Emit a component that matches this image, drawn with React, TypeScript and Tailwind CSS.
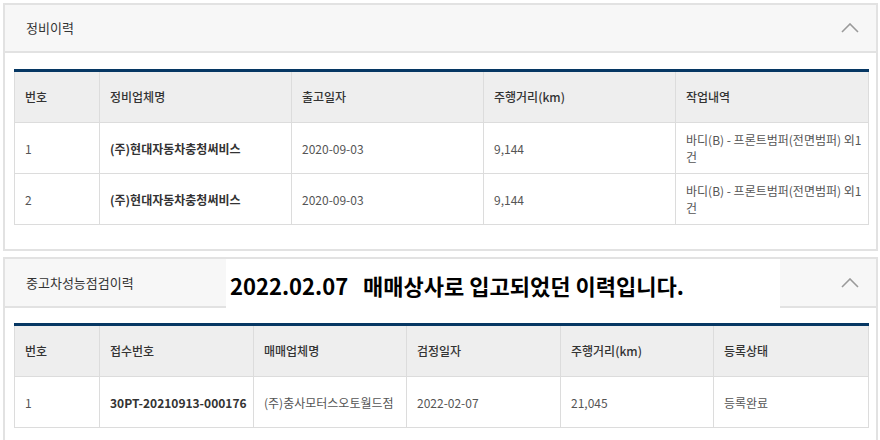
import React from "react";

const font = { fontFamily: '"Noto Sans CJK KR", "Noto Sans", sans-serif' };

function Chevron() {
  return (
    <svg width="18" height="10" viewBox="0 0 18 10" className="mr-[17px]">
      <polyline points="1,9 9,1 17,9" fill="none" stroke="#9a9a9a" strokeWidth="1.6" />
    </svg>
  );
}

const th = "border border-[#dcdcdc] bg-[#eeeeee] h-[52px] px-[10px] text-left font-medium text-[#333] text-[12px]";
const td = "border border-[#dcdcdc] h-[51px] px-[10px] text-left text-[12px] text-[#555] leading-[17px]";

export default function App() {
  return (
    <div className="w-[880px] h-[440px] overflow-hidden bg-white pt-[3px] pl-[3px]" style={font}>
      {/* Panel 1 */}
      <div className="w-[875px] border-2 border-[#e2e2e2]">
        <div className="h-[48px] bg-[#f7f7f7] border-b-2 border-[#e2e2e2] flex items-center justify-between pl-[21px]">
          <span className="text-[13px] text-[#333]">정비이력</span>
          <Chevron />
        </div>
        <div className="pt-[16px] pb-[24px] pl-[9px]">
          <table className="w-[854px] table-fixed border-collapse border-t-[3px] border-t-[#063763]">
            <colgroup>
              <col className="w-[85px]" />
              <col className="w-[192px]" />
              <col className="w-[192px]" />
              <col className="w-[192px]" />
              <col className="w-[193px]" />
            </colgroup>
            <thead>
              <tr>
                <th className={th}>번호</th>
                <th className={th}>정비업체명</th>
                <th className={th}>출고일자</th>
                <th className={th}>주행거리(km)</th>
                <th className={th}>작업내역</th>
              </tr>
            </thead>
            <tbody>
              {[1, 2].map((n) => (
                <tr key={n}>
                  <td className={td}>{n}</td>
                  <td className={td + " font-bold !text-[#333]"}>(주)현대자동차충청써비스</td>
                  <td className={td}>2020-09-03</td>
                  <td className={td}>9,144</td>
                  <td className={td}>
                    <span className="whitespace-nowrap">바디(B) - 프론트범퍼(전면범퍼) 외1</span>
                    <br />건
                  </td>
                </tr>
              ))}
            </tbody>
          </table>
        </div>
      </div>

      {/* Panel 2 */}
      <div className="relative w-[875px] border-2 border-[#e2e2e2] mt-[6px]">
        <div className="h-[49px] bg-[#f7f7f7] border-b-2 border-[#e2e2e2] flex items-center justify-between pl-[21px]">
          <span className="text-[13px] text-[#333]">중고차성능점검이력</span>
          <Chevron />
        </div>
        <div className="absolute left-[221px] top-0 w-[554px] h-[51px] bg-white flex items-center pl-[4px]">
          <span className="text-[22px] font-bold text-black leading-[22px] whitespace-pre">
            2022.02.07   매매상사로 입고되었던 이력입니다.
          </span>
        </div>
        <div className="pt-[15px] pb-[24px] pl-[9px]">
          <table className="w-[854px] table-fixed border-collapse border-t-[3px] border-t-[#063763]">
            <colgroup>
              <col className="w-[85px]" />
              <col className="w-[154px]" />
              <col className="w-[153px]" />
              <col className="w-[154px]" />
              <col className="w-[153px]" />
              <col className="w-[155px]" />
            </colgroup>
            <thead>
              <tr>
                <th className={th}>번호</th>
                <th className={th}>접수번호</th>
                <th className={th}>매매업체명</th>
                <th className={th}>검정일자</th>
                <th className={th}>주행거리(km)</th>
                <th className={th}>등록상태</th>
              </tr>
            </thead>
            <tbody>
              <tr>
                <td className={td}>1</td>
                <td className={td + " font-bold !text-[#333] whitespace-nowrap"}>30PT-20210913-000176</td>
                <td className={td + " whitespace-nowrap"}>(주)충사모터스오토월드점</td>
                <td className={td}>2022-02-07</td>
                <td className={td}>21,045</td>
                <td className={td}>등록완료</td>
              </tr>
            </tbody>
          </table>
        </div>
      </div>
    </div>
  );
}
